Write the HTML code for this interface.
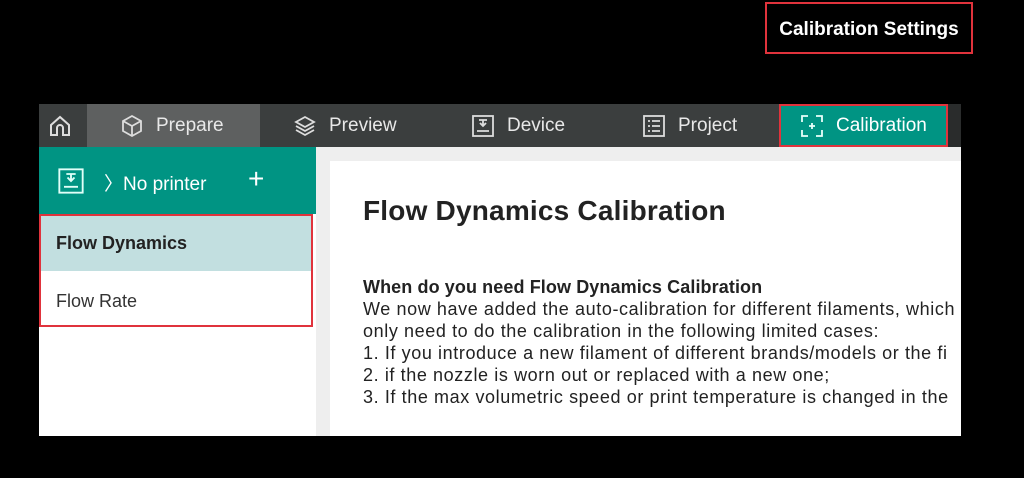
<!DOCTYPE html>
<html><head><style>
*{margin:0;padding:0;box-sizing:border-box}
body{width:1024px;height:478px;background:#000;position:relative;overflow:hidden;font-family:"Liberation Sans",sans-serif}
.a{position:absolute}
.tab{position:absolute;top:104px;height:43px;color:#e8e8e8;font-size:19px;display:flex;align-items:center}
.tab svg{margin-right:12px}
</style></head><body>
<div class="a" style="left:765px;top:2px;width:208px;height:52px;border:2px solid #e0333c;color:#fff;font-weight:bold;font-size:19px;display:flex;align-items:center;justify-content:center;white-space:nowrap;padding-top:4px">Calibration Settings</div>

<div class="a" style="left:39px;top:104px;width:922px;height:43px;background:#3b3e3e"></div>
<div class="a" style="left:87px;top:104px;width:173px;height:43px;background:#5e6060"></div>
<div class="a" style="left:779px;top:104px;width:169px;height:43px;background:#009483;border:2px solid #e0333c"></div>
<div class="a" style="left:948px;top:104px;width:13px;height:43px;background:#2a2c2c"></div>

<div class="tab" style="left:48px"><svg width="24" height="24" viewBox="0 0 24 24" fill="none" stroke="#ddd" stroke-width="2"><path d="M3 11L12 3l9 8v10h-6v-7a3 3 0 0 0-6 0v7H3z"/></svg></div>
<div class="tab" style="left:120px"><svg width="24" height="24" viewBox="0 0 24 24" fill="none" stroke="#ddd" stroke-width="1.8"><path d="M12 2l9 5v10l-9 5-9-5V7z M3 7l9 5 9-5 M12 12v10"/></svg>Prepare</div>
<div class="tab" style="left:293px"><svg width="24" height="24" viewBox="0 0 24 24" fill="none" stroke="#ddd" stroke-width="1.8"><path d="M12 3l9 5-9 5-9-5z M3 12l9 5 9-5 M3 16l9 5 9-5"/></svg>Preview</div>
<div class="tab" style="left:471px"><svg width="24" height="24" viewBox="0 0 24 24" fill="none" stroke="#ddd" stroke-width="1.8"><rect x="2" y="2" width="20" height="20"/><path d="M6 17h12 M8 6h8 M12 6v6 M9 9l3 3 3-3"/></svg>Device</div>
<div class="tab" style="left:642px"><svg width="24" height="24" viewBox="0 0 24 24" fill="none" stroke="#ddd" stroke-width="1.8"><rect x="2" y="2" width="20" height="20"/><path d="M6 7h2M10 7h8M6 12h2M10 12h8M6 17h2M10 17h8"/></svg>Project</div>
<div class="tab" style="left:800px;color:#fff"><svg width="24" height="24" viewBox="0 0 24 24" fill="none" stroke="#e8fffa" stroke-width="1.8"><path d="M2 8V2h6M16 2h6v6M22 16v6h-6M8 22H2v-6M12 9v6M9 12h6"/></svg>Calibration</div>

<div class="a" style="left:39px;top:147px;width:277px;height:67px;background:#009483"></div>
<svg class="a" style="left:57px;top:167px" width="28" height="28" viewBox="0 0 24 24" fill="none" stroke="#e0fff8" stroke-width="1.6"><rect x="2" y="2" width="20" height="20"/><path d="M6 17h12 M8 6h8 M12 6v6 M9 9l3 3 3-3"/></svg>
<div class="a" style="left:104px;top:169px;color:#fff;font-size:19px">〉No printer</div>
<div class="a" style="left:248px;top:163px;color:#fff;font-size:28px;font-weight:300">+</div>

<div class="a" style="left:39px;top:214px;width:277px;height:222px;background:#fff"></div>
<div class="a" style="left:41px;top:216px;width:270px;height:55px;background:#c2dfe0"></div>
<div class="a" style="left:39px;top:214px;width:274px;height:113px;border:2px solid #e0333c"></div>
<div class="a" style="left:56px;top:233px;font-size:18px;font-weight:bold;color:#222">Flow Dynamics</div>
<div class="a" style="left:56px;top:291px;font-size:18px;color:#333">Flow Rate</div>

<div class="a" style="left:316px;top:147px;width:645px;height:289px;background:#eeeeee"></div>
<div class="a" style="left:330px;top:161px;width:631px;height:275px;background:#fff;overflow:hidden">
<div class="a" style="left:33px;top:34px;font-size:28px;font-weight:bold;color:#222;white-space:nowrap;letter-spacing:0.2px">Flow Dynamics Calibration</div>
<div class="a" style="left:33px;top:115px;font-size:18px;color:#222;line-height:22px;white-space:nowrap;letter-spacing:0.6px">
<b style="letter-spacing:0.1px">When do you need Flow Dynamics Calibration</b><br>
We now have added the auto-calibration for different filaments, which<br>
only need to do the calibration in the following limited cases:<br>
1. If you introduce a new filament of different brands/models or the fi<br>
2. if the nozzle is worn out or replaced with a new one;<br>
3. If the max volumetric speed or print temperature is changed in the</div>
</div>
</body></html>
